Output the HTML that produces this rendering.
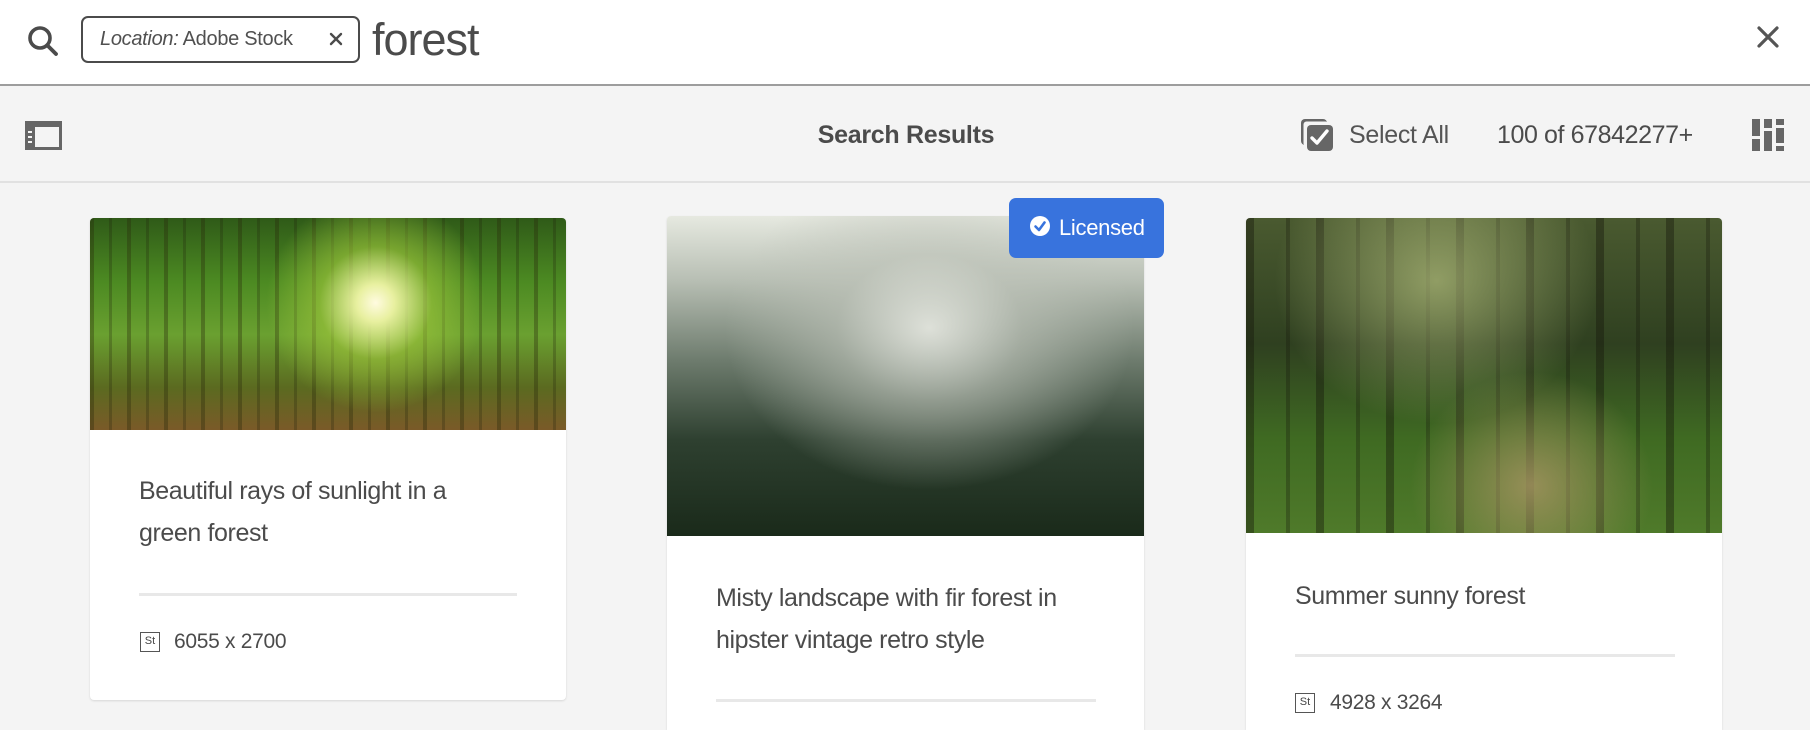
<!DOCTYPE html>
<html style="width:1810px;height:730px;overflow:hidden"><head><meta charset="utf-8">
<style>
*{margin:0;padding:0;box-sizing:border-box}
body{width:1810px;height:730px;overflow:hidden;background:#f4f4f4;font-family:"Liberation Sans",sans-serif;color:#4b4b4b;position:relative}
.abs{position:absolute}
#top{left:0;top:0;width:1810px;height:86px;background:#fff;border-bottom:2px solid #9d9d9d}
#tb{left:0;top:88px;width:1810px;height:95px;background:#f4f4f4;border-bottom:2px solid #e1e1e1}
.chip{left:81px;top:16px;width:279px;height:47px;border:2px solid #4b4b4b;border-radius:7px;font-size:20px;line-height:43px;padding-left:17px;color:#505050;letter-spacing:-0.3px}
.card{background:#fff;border-radius:4px;box-shadow:0 1px 2px rgba(0,0,0,.12);overflow:hidden}
.title{font-size:25px;line-height:42px;color:#4b4b4b;letter-spacing:-0.4px}
.div{height:3px;background:#e8e8e8}
.st{width:20px;height:20px;border:1.5px solid #555;font-size:11px;line-height:17px;text-align:center;color:#444}
.dim{font-size:21px;color:#4b4b4b;letter-spacing:-0.3px}
</style></head><body>
<div id="top" class="abs"></div>
<svg class="abs" style="left:26px;top:24px" width="34" height="34" viewBox="0 0 34 34"><circle cx="14" cy="14" r="10" fill="none" stroke="#4b4b4b" stroke-width="3.6"/><line x1="21.5" y1="21.5" x2="30" y2="30" stroke="#4b4b4b" stroke-width="3.8" stroke-linecap="round"/></svg>
<div class="abs chip"><i>Location:</i> Adobe Stock</div>
<svg class="abs" style="left:329px;top:32px" width="14" height="14" viewBox="0 0 14 14"><path d="M2 2L12 12M12 2L2 12" stroke="#4b4b4b" stroke-width="2.4" stroke-linecap="round"/></svg>
<div class="abs" style="left:372px;top:14px;font-size:45px;color:#4b4b4b;letter-spacing:-1px">forest</div>
<svg class="abs" style="left:1756px;top:25px" width="24" height="24" viewBox="0 0 24 24"><path d="M3 3L21 21M21 3L3 21" stroke="#555" stroke-width="3.2" stroke-linecap="round"/></svg>
<div id="tb" class="abs"></div>
<svg class="abs" style="left:25px;top:121px" width="37" height="29" viewBox="0 0 37 29"><rect x="1.5" y="1.5" width="34" height="26" fill="none" stroke="#666" stroke-width="3"/><rect x="1" y="1" width="35" height="5" fill="#666"/><rect x="1" y="1" width="9" height="27" fill="#666"/><rect x="3" y="10" width="4" height="2" fill="#f4f4f4"/><rect x="3" y="15" width="4" height="2" fill="#f4f4f4"/><rect x="3" y="20" width="4" height="2" fill="#f4f4f4"/></svg>
<div class="abs" style="left:806px;top:121px;width:200px;text-align:center;font-size:25px;font-weight:bold;color:#4b4b4b;letter-spacing:-0.3px">Search Results</div>
<svg class="abs" style="left:1300px;top:118px" width="34" height="34" viewBox="0 0 34 34"><rect x="1" y="1" width="26" height="26" rx="4" fill="#666"/><rect x="3.5" y="3.5" width="25" height="25" rx="3" fill="#f4f4f4"/><rect x="7" y="7" width="26" height="26" rx="4" fill="#666"/><path d="M12 20L17 25L27 13" fill="none" stroke="#fff" stroke-width="3.4" stroke-linecap="round" stroke-linejoin="round"/></svg>
<div class="abs" style="left:1349px;top:121px;font-size:25px;color:#555;letter-spacing:-0.3px">Select All</div>
<div class="abs" style="left:1497px;top:121px;font-size:25px;color:#4b4b4b;letter-spacing:-0.4px">100 of 67842277+</div>
<svg class="abs" style="left:1752px;top:119px" width="32" height="32" viewBox="0 0 32 32" fill="#666"><rect x="0" y="0" width="8" height="17"/><rect x="0" y="20" width="8" height="12"/><rect x="12" y="0" width="8" height="9"/><rect x="12" y="12" width="8" height="20"/><rect x="24" y="0" width="8" height="6"/><rect x="24" y="9" width="8" height="15"/><rect x="24" y="27" width="8" height="5"/></svg>

<div class="abs card" style="left:90px;top:218px;width:476px;height:482px">
<div style="height:212px;background:radial-gradient(circle at 60% 40%,#fffbe0 0,#e8f0a0 6%,rgba(160,200,60,.6) 18%,rgba(0,0,0,0) 35%),repeating-linear-gradient(90deg,rgba(40,40,10,.35) 0 4px,rgba(0,0,0,0) 4px 19px,rgba(30,30,10,.25) 19px 22px,rgba(0,0,0,0) 22px 37px),linear-gradient(180deg,#2f5a18 0%,#4c8a22 30%,#6aa030 55%,#5b6a20 80%,#7a5a28 100%)"></div>
</div>
<div class="abs title" style="left:139px;top:470px;width:400px">Beautiful rays of sunlight in a<br>green forest</div>
<div class="abs div" style="left:139px;top:593px;width:378px"></div>
<div class="abs st" style="left:140px;top:632px">St</div>
<div class="abs dim" style="left:174px;top:630px">6055 x 2700</div>

<div class="abs card" style="left:667px;top:216px;width:477px;height:514px;border-radius:4px 4px 0 0">
<div style="height:320px;background:radial-gradient(ellipse at 55% 35%,rgba(230,232,225,.9) 0,rgba(190,195,185,.6) 25%,rgba(0,0,0,0) 55%),linear-gradient(180deg,#e6e9e0 0%,#b8bfb4 20%,#6e7c6e 45%,#2e4030 70%,#1a2a1a 100%)"></div>
</div>
<div class="abs title" style="left:716px;top:577px;width:420px">Misty landscape with fir forest in<br>hipster vintage retro style</div>
<div class="abs div" style="left:716px;top:699px;width:380px"></div>

<div class="abs card" style="left:1246px;top:218px;width:476px;height:512px;border-radius:4px 4px 0 0">
<div style="height:315px;background:radial-gradient(ellipse at 40% 20%,rgba(200,210,140,.6) 0,rgba(0,0,0,0) 40%),radial-gradient(ellipse at 60% 85%,rgba(170,150,100,.8) 0,rgba(0,0,0,0) 30%),repeating-linear-gradient(90deg,rgba(20,20,10,.4) 0 8px,rgba(0,0,0,0) 8px 40px,rgba(20,20,10,.3) 40px 44px,rgba(0,0,0,0) 44px 70px),linear-gradient(180deg,#4a5a30 0%,#2f4020 40%,#3f6a22 70%,#4f7a2a 100%)"></div>
</div>
<div class="abs title" style="left:1295px;top:575px">Summer sunny forest</div>
<div class="abs div" style="left:1295px;top:654px;width:380px"></div>
<div class="abs st" style="left:1295px;top:693px">St</div>
<div class="abs dim" style="left:1330px;top:691px">4928 x 3264</div>

<div class="abs" style="left:1009px;top:198px;width:155px;height:60px;background:#3873dd;border-radius:7px;color:#fff;font-size:22px;line-height:60px;padding-left:50px;letter-spacing:-0.3px">Licensed</div>
<svg class="abs" style="left:1030px;top:216px" width="20" height="20" viewBox="0 0 20 20"><circle cx="10" cy="10" r="10" fill="#fff"/><path d="M5.5 10.5L9 14L14.5 6.5" fill="none" stroke="#3873dd" stroke-width="2.6" stroke-linecap="round" stroke-linejoin="round"/></svg>
</body></html>
